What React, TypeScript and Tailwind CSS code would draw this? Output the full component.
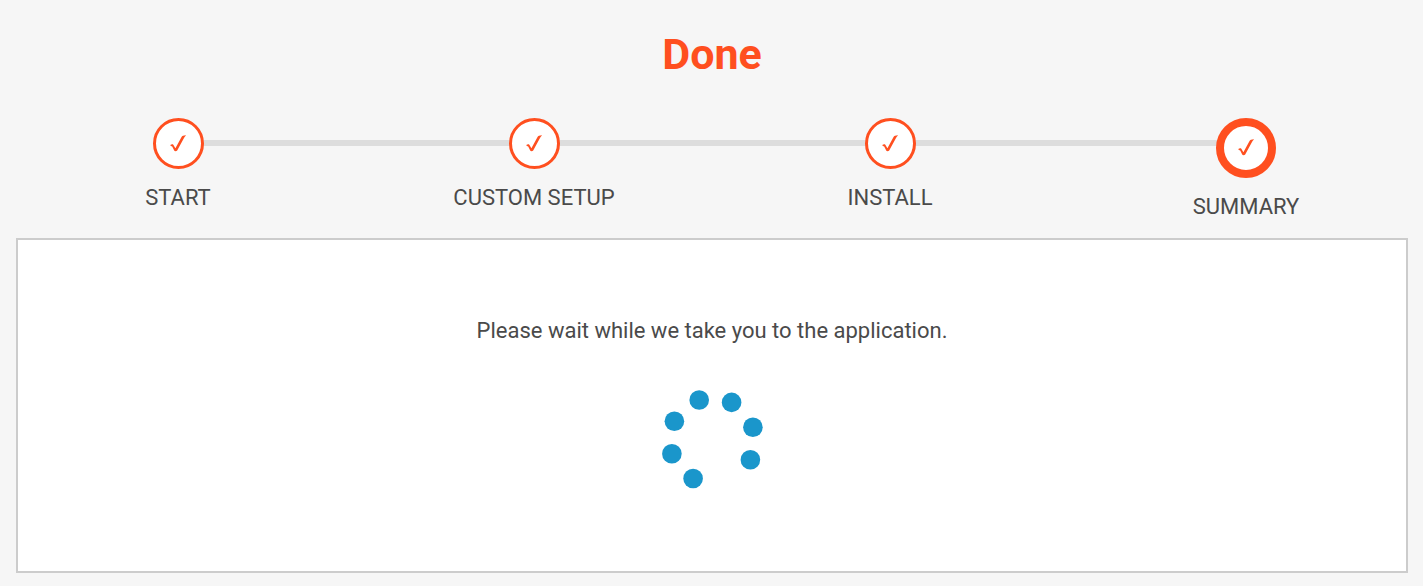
const STEPS = ['START', 'CUSTOM SETUP', 'INSTALL', 'SUMMARY'];

const DOTS = [
  { x: 39.2, y: 12 },
  { x: 71.6, y: 14.4 },
  { x: 92.9, y: 39.3 },
  { x: 90.4, y: 71.8 },
  { x: 33.1, y: 90.5 },
  { x: 11.9, y: 65.7 },
  { x: 14.4, y: 33.2 },
];

function CheckMark() {
  return (
    <svg width="17" height="18" viewBox="0 0 17 18" fill="#ff4f1f" aria-hidden="true">
      <path d="M0.6 9.8 C1.2 9.2 2.8 9 3.3 9.8 L5.4 13.3 L11.4 2.2 C12.2 0.9 13.4 0.4 16 0.3 C15.8 1 14.8 1.6 14 2.9 L7.2 15.4 C6.6 16.3 4.7 16.4 4.2 15.6 L2.2 11.6 C1.8 11 1.2 10.8 0.5 10.9 Z" />
    </svg>
  );
}

function Step({ label, index }: { label: string; index: number }) {
  const current = index === STEPS.length - 1;
  return (
    <li aria-current={current ? 'step' : undefined}>
      <div className="grid grid-cols-[1fr_auto_1fr] items-start">
        <span className={index === 0 ? 'h-1.5' : 'mt-[22px] h-1.5 bg-[#dddddd]'} />
        <span
          className={
            current
              ? 'relative z-10 -mx-px flex size-[60px] items-center justify-center rounded-full border-8 border-[#ff4f1f] bg-white'
              : 'relative z-10 -mx-px flex size-[51px] items-center justify-center rounded-full border-3 border-[#ff4f1f] bg-white'
          }
        >
          <CheckMark />
        </span>
        <span className={current ? 'h-1.5' : 'mt-[22px] h-1.5 bg-[#dddddd]'} />
      </div>
      <p className="mt-4 text-center text-[22px] leading-[26px]">{label}</p>
    </li>
  );
}

export default function App() {
  return (
    <div className="min-h-screen overflow-x-clip bg-[#f6f6f6]">
      <main className="-mr-px pb-[13px] font-[Roboto,sans-serif] text-[#4a4a4a]">
        <h1 className="pt-[30px] text-center text-[43px] leading-[48px] font-bold text-[#ff4f1f]">Done</h1>
        <ol className="mt-10 grid grid-cols-4">
          {STEPS.map((label, index) => (
            <Step key={label} label={label} index={index} />
          ))}
        </ol>
        <section className="mx-4 mt-[18px] flex flex-col items-center border-2 border-[#cccccc] bg-white pt-[78px] pb-[79px]">
          <p className="text-center text-[22px] leading-[26px]">Please wait while we take you to the application.</p>
          <svg className="mt-11" width="104" height="104" viewBox="0 0 104 104" role="status" aria-label="Loading">
            {DOTS.map((dot) => (
              <circle key={dot.x} cx={dot.x} cy={dot.y} r="9.8" fill="#1a96cb" />
            ))}
          </svg>
        </section>
      </main>
    </div>
  );
}
